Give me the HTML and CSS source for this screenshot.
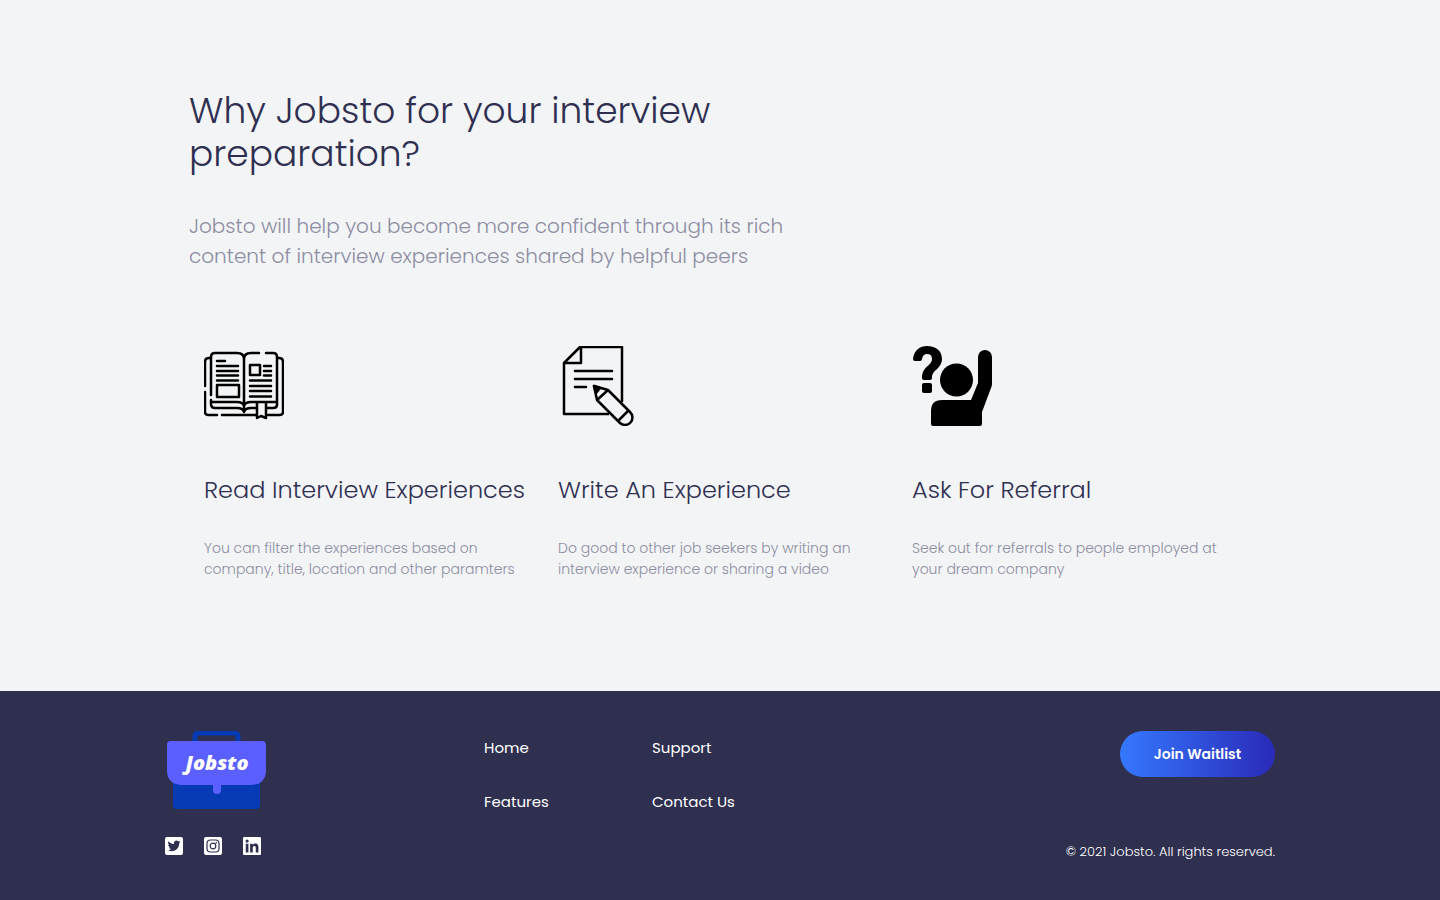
FILE: index.html
```html
<!DOCTYPE html>
<html lang="en">
<head>
<meta charset="utf-8">
<meta name="viewport" content="width=device-width, initial-scale=1">
<title>Jobsto</title>
<link rel="stylesheet" href="styles.css">
</head>
<body>
<main class="features">
  <div class="features-inner">
    <header class="intro">
      <h1 class="intro-title">Why Jobsto for your interview preparation?</h1>
      <p class="intro-text">Jobsto will help you become more confident through its rich content of interview experiences shared by helpful peers</p>
    </header>
    <div class="cards">
      <article class="card">
        <svg class="card-icon" viewBox="0 0 80 80" fill="none" stroke="#000" stroke-width="2.5" stroke-linecap="round" stroke-linejoin="round" aria-hidden="true">
          <path d="M7 49V11q0-4 4-4h22q7 0 7 6q0-6 7-6h8M62 7h7q4 0 4 4v48q0 3-4 3h-6M53 62h-6q-6 0-7 4q-1-4-7-4H11q-4 0-4-4v-4M7 56h26q6 0 7 4q1-4 7-4h26M40 13v50"/>
          <path d="M6 12H5q-4 0-4 4v24M1 46v20q0 3 3 3h9M18 69h34M64 69h12q3 0 3-3V16q0-4-4-4h-1"/>
          <path d="M53 57v15l4-2 5 2V57"/>
          <path d="M13 15h8M13 20h21M13 25h21M13 29.500h21M13 34.500h21M13 39h22v12H13zM46 19h10v10H46zM60 20h7M60 25h7M60 29.500h7M46 34.500h21M46 40h21M46 45h21M46 50.500h21"/>
        </svg>
        <h2 class="card-title">Read Interview Experiences</h2>
        <p class="card-text">You can filter the experiences based on<br>company, title, location and other paramters</p>
      </article>
      <article class="card">
        <svg class="card-icon" viewBox="0 0 80 80" fill="none" stroke="#000" stroke-width="2.500" stroke-linejoin="round" aria-hidden="true">
          <path d="M51 68H6V17L22 1h42v55M6 17h17V1"/>
          <path d="M17 25h37M17 33h37M17 41h11" stroke-linecap="round"/>
          <path d="M36 40l14 4 22 22a6.500 6.500 0 0 1-10 11L39 54zM39 54l11-10M61 74l9-9"/>
          <path d="M36 40l6 2-4 5z" fill="#000"/>
        </svg>
        <h2 class="card-title">Write An Experience</h2>
        <p class="card-text">Do good to other job seekers by writing an<br>interview experience or sharing a video</p>
      </article>
      <article class="card">
        <svg class="card-icon" viewBox="0 0 80 80" aria-hidden="true">
          <circle cx="44.500" cy="34" r="16.500"/>
          <path d="M21 80q-2 0-2-2V65q0-11 11-11h29l7-17V11a7 7 0 0 1 14 0v27q0 2-1 4l-9 24v12q0 2-2 2z"/>
          <path d="M1 13C2 4 8 0 15 0c9 0 15 5 15 13 0 9-9 11-10 17v2q0 2-2 2h-6q-2 0-2-2c0-12 10-12 10-19q0-5-5-5-4 0-5 5 0 2-2 2H3q-2 0-2-2z"/>
          <rect x="10" y="37" width="10" height="10" rx="2"/>
        </svg>
        <h2 class="card-title">Ask For Referral</h2>
        <p class="card-text">Seek out for referrals to people employed at<br>your dream company</p>
      </article>
    </div>
  </div>
</main>
<footer class="footer">
  <div class="footer-inner">
    <div class="brand">
      <svg class="logo" viewBox="0 0 104 80" role="img" aria-label="Jobsto">
        <path d="M30 14V6q0-4 4-4h35q4 0 4 4v8" fill="none" stroke="#063bb5" stroke-width="5"/>
        <rect x="8" y="38" width="87" height="40" rx="4" fill="#063bb5"/>
        <path d="M6 10h91q4 0 4 4v25q0 15-16 15H18Q2 54 2 39V14q0-4 4-4z" fill="#5b5fff"/>
        <path d="M48 52h8v7a4 4 0 0 1-8 0z" fill="#5b5fff"/>
        <text class="logo-text" x="52" y="39" text-anchor="middle">Jobsto</text>
      </svg>
      <div class="social">
        <a href="#" aria-label="Twitter"><svg class="social-icon" viewBox="0 0 448 448"><path fill="#fff" d="M400 0H48A48 48 0 0 0 0 48v352a48 48 0 0 0 48 48h352a48 48 0 0 0 48-48V48a48 48 0 0 0-48-48zm-49 159c0 3 0 6 0 9 0 87-66 187-187 187-37 0-72-11-101-29 38 4 72-6 98-26-29-1-53-20-61-46 10 2 19 2 30-1-30-6-53-33-53-65v-1c9 5 19 8 30 8-31-21-37-59-20-88 33 40 81 66 136 69-13-63 34-89 64-89 19 0 36 8 48 21 15-3 29-8 42-16-5 15-15 28-29 36 13-1 26-5 38-10-9 13-20 25-35 41z"/></svg></a>
        <a href="#" aria-label="Instagram"><svg class="social-icon" viewBox="0 0 18 18"><rect width="18" height="18" rx="2" fill="#fff"/><g fill="none" stroke="#2f2f4f" stroke-width="1.200"><rect x="3" y="3" width="12" height="12" rx="3.500"/><circle cx="9" cy="9" r="2.800"/></g><circle cx="12.300" cy="5.700" r=".8" fill="#2f2f4f"/></svg></a>
        <a href="#" aria-label="LinkedIn"><svg class="social-icon" viewBox="0 0 448 448"><path fill="#fff" d="M416 0H32C14 0 0 15 0 33v382c0 18 14 33 32 33h384c18 0 32-15 32-33V33c0-18-14-33-32-33zM135 384H69V170h66v214zM102 141a38 38 0 1 1 0-77 38 38 0 0 1 0 77zm282 243h-66V280c0-25-1-57-35-57s-40 27-40 55v106h-66V170h64v29h1c9-17 31-35 63-35 67 0 79 45 79 103z"/></svg></a>
      </div>
    </div>
    <nav class="links" aria-label="Footer">
      <a href="#">Home</a>
      <a href="#">Support</a>
      <a href="#">Features</a>
      <a href="#">Contact Us</a>
    </nav>
    <div class="actions">
      <button class="join" type="button">Join Waitlist</button>
      <p class="copyright">© 2021 Jobsto. All rights reserved.</p>
    </div>
  </div>
</footer>
</body>
</html>
```
FILE: styles.css
```css
* { box-sizing: border-box; }
body {
  margin: 0;
  min-height: 100vh;
  display: flex;
  flex-direction: column;
  background: #f3f4f6;
  color: #2f2f51;
  font-family: Poppins, Inter, "Liberation Sans", sans-serif;
}
h1, h2, p { margin: 0; }
a { color: inherit; text-decoration: none; }
svg { display: block; }

.features { padding: 89px 24px 111px; }
.features-inner { max-width: 1062px; margin: 0 auto; }
.intro { max-width: 610px; }
.intro-title { font-size: 36px; line-height: 43px; font-weight: 300; }
.intro-text { margin-top: 36px; font-size: 20px; line-height: 30px; font-weight: 300; color: #8d8da3; }
.cards {
  display: grid;
  grid-template-columns: repeat(3, 1fr);
  margin-top: 75px;
  padding-left: 15px;
  margin-right: -15px;
}
.card-icon { width: 80px; height: 80px; }
.card-title { margin-top: 48px; font-size: 24px; line-height: 32px; font-weight: 300; white-space: nowrap; }
.card-text { margin-top: 32px; font-size: 14px; line-height: 21px; font-weight: 300; color: #8d8da3; }

.footer { flex: 1; background: #2f2f4f; color: #fff; padding: 40px 15px; }
.footer-inner {
  display: flex;
  max-width: 1110px;
  margin: 0 auto;
}
.brand { width: 319px; }
.logo { width: 104px; height: 80px; }
.logo-text { font: italic 800 20px "Open Sans", sans-serif; fill: #fff; }
.social { display: flex; gap: 21px; margin-top: 26px; }
.social-icon { width: 18px; height: 18px; }
.links {
  display: grid;
  grid-template-columns: 168px auto;
  row-gap: 30px;
  align-content: start;
  padding-top: 5px;
  font-size: 15px;
  line-height: 24px;
}
.actions {
  display: flex;
  flex-direction: column;
  align-items: flex-end;
  justify-content: space-between;
  margin-left: auto;
}
.join {
  width: 155px;
  height: 46px;
  border: 0;
  border-radius: 23px;
  background: linear-gradient(90deg, #3578ff, #2a2ab8);
  color: #fff;
  font: 600 14px/20px Poppins, Inter, "Liberation Sans", sans-serif;
  cursor: pointer;
}
.copyright { font-size: 13px; line-height: 16px; font-weight: 300; margin-bottom: -5px; }
```
